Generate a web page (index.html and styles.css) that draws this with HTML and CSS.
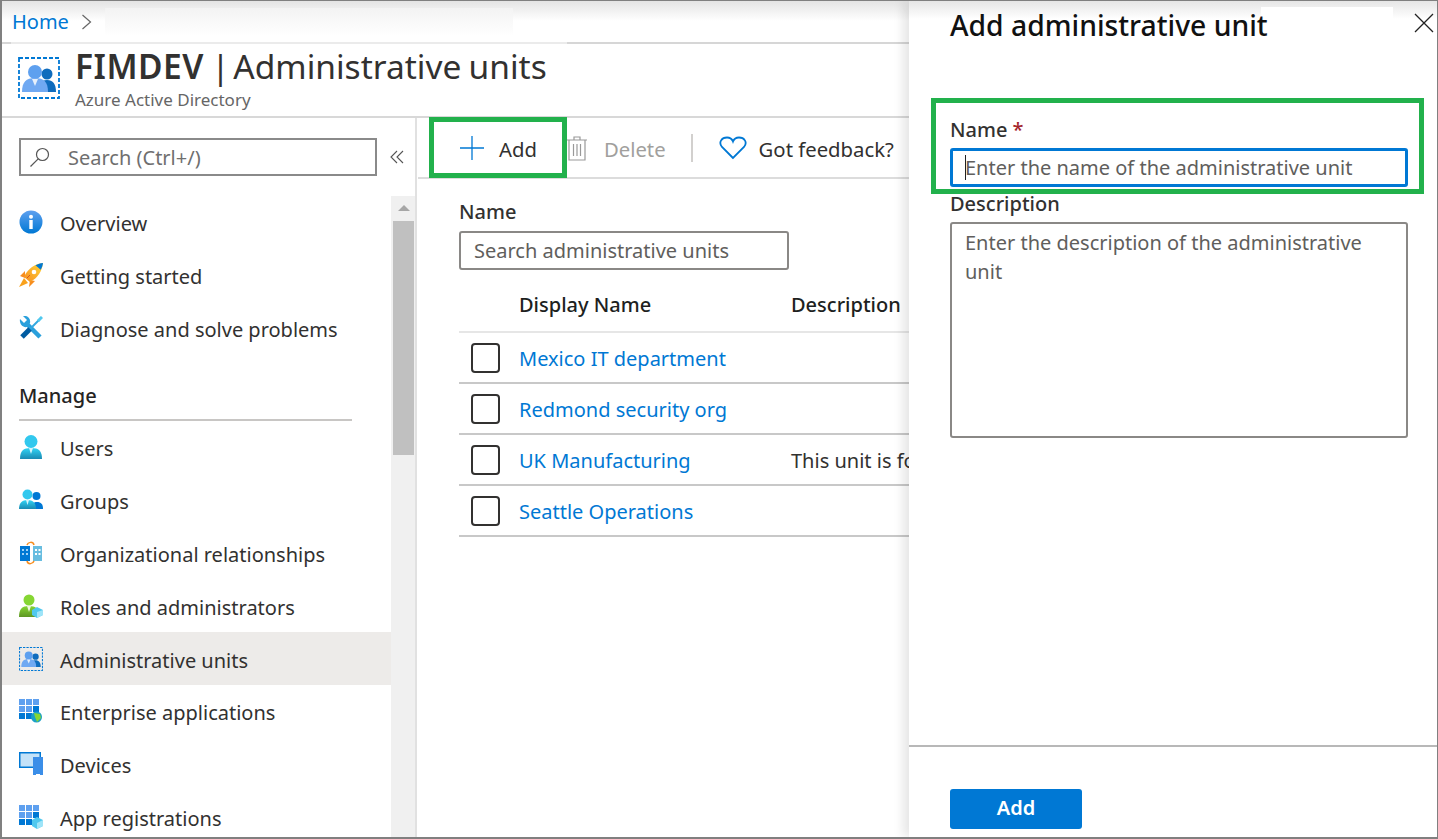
FILE: index.html
```html
<!DOCTYPE html>
<html lang="en">

<head>
    <meta charset="UTF-8">
    <title>FIMDEV | Administrative units</title>
    <link rel="stylesheet" href="styles.css">
</head>

<body>
    <svg class="sprites" width="0" height="0">
        <defs>
            <linearGradient id="blueBall" x1="0" y1="0" x2="0" y2="1"><stop offset="0" stop-color="#5ea0ef"/><stop offset="1" stop-color="#0078d4"/></linearGradient>
            <linearGradient id="cyanUser" x1="0" y1="0" x2="0" y2="1"><stop offset="0" stop-color="#32d4f5"/><stop offset="1" stop-color="#198ab3"/></linearGradient>
            <linearGradient id="greenUser" x1="0" y1="0" x2="0" y2="1"><stop offset="0" stop-color="#86d633"/><stop offset="1" stop-color="#5e9624"/></linearGradient>
            <linearGradient id="rocket" x1="0" y1="1" x2="1" y2="0"><stop offset="0" stop-color="#f78d1e"/><stop offset="1" stop-color="#ffd83a"/></linearGradient>
            <symbol id="adminUnit" viewBox="0 0 42 42">
                <rect x="1" y="1" width="40" height="40" fill="none" stroke="#0078d4" stroke-width="1.800" stroke-dasharray="4 2"/>
                <circle cx="29" cy="17" r="5.500" fill="#0f6cbd"/>
                <path d="M20 35c0-8 3-12 9-12s9 4 9 12z" fill="#0f6cbd"/>
                <circle cx="17" cy="15" r="7" fill="#5ea0ef"/>
                <path d="M4 35c0-10 4-14 13-14s13 4 13 14z" fill="#70a9f2"/>
                <path d="M14 22h6l-3 7z" fill="#e6f0fb"/>
            </symbol>
            <symbol id="gridBlue" viewBox="0 0 24 24">
                <path fill="#5ea0ef" d="M0 0h6v6H0zM7 0h6v6H7zM14 0h6v6h-6zM0 7h6v6H0zM7 7h6v6H7z"/>
                <path fill="#0078d4" d="M14 7h6v6h-6zM0 14h6v6H0zM7 14h6v6H7z"/>
            </symbol>
        </defs>
    </svg>

    <div class="window">
        <div class="crumbs">
            <a class="link" href="#">Home</a>
            <svg class="chev" width="11" height="16" viewBox="0 0 11 16"><path d="M1.500 1l8 7-8 7" fill="none" stroke="#666" stroke-width="1.200"/></svg>
        </div>

        <div class="title-bar">
            <svg class="title-icon" width="42" height="42"><use href="#adminUnit"/></svg>
            <div class="title-text">
                <h1><b>FIMDEV</b> <span class="bar">| </span>Administrative units</h1>
                <div class="subtitle">Azure Active Directory</div>
            </div>
        </div>

        <div class="body">
            <nav class="sidebar">
                <div class="side-search-row">
                    <div class="side-search">
                        <svg width="22" height="22" viewBox="0 0 22 22"><circle cx="13.500" cy="8.500" r="6" fill="none" stroke="#555" stroke-width="1.200"/><path d="M9.200 12.800L1.500 20.500" stroke="#555" stroke-width="1.200"/></svg>
                        <span>Search (Ctrl+/)</span>
                    </div>
                    <svg class="collapse" width="14" height="14" viewBox="0 0 14 14"><path d="M7 1L1 7l6 6M13 1L7 7l6 6" fill="none" stroke="#555" stroke-width="1.100"/></svg>
                </div>

                <div class="side-scroll">
                    <ul class="menu">
                        <li class="item">
                            <svg class="ico" viewBox="0 0 24 24"><circle cx="12" cy="12" r="11.500" fill="url(#blueBall)"/><rect x="10.300" y="10" width="3.400" height="9" fill="#fff"/><circle cx="12" cy="6.800" r="2" fill="#fff"/></svg>
                            Overview
                        </li>
                        <li class="item">
                            <svg class="ico" viewBox="0 0 24 24"><path d="M6 8L1 13l5 2zM11 17l-1 7 6-6z" fill="#f78d1e"/><path d="M5 15l-5 9 9-4z" fill="#f9a11b"/><path d="M24 0C16 1 9 5 5 14l6 5C19 15 23 8 24 0z" fill="url(#rocket)"/><path d="M24 0c-3 .3-5 1-7.500 2.300l5.200 4.400C23 4.500 23.700 2.500 24 0z" fill="#0078d4"/><circle cx="15" cy="9" r="2.300" fill="#fff"/><path d="M8 15l3-3" stroke="#d9541e" stroke-width="1"/></svg>
                            Getting started
                        </li>
                        <li class="item">
                            <svg class="ico" viewBox="0 0 24 24"><path d="M8 8l13 13" stroke="#2aa0dc" stroke-width="4.500"/><path d="M1 3l4 4 3-3-4-4c4-1 8 2 7 7l-3 4C4 12 0 8 1 3z" fill="#2aa0dc"/><path d="M11 13l9-9" stroke="#32a8e0" stroke-width="2"/><path d="M19 5l4-4" stroke="#50c8ee" stroke-width="3"/><path d="M3 21l8-8" stroke="#005ba1" stroke-width="5"/></svg>
                            Diagnose and solve problems
                        </li>
                    </ul>

                    <div class="menu-head">Manage</div>

                    <ul class="menu menu-manage">
                        <li class="item">
                            <svg class="ico" viewBox="0 0 24 24"><circle cx="12" cy="6.500" r="6.500" fill="#32c8ee"/><path d="M1 24c0-8 3-11 11-11s11 3 11 11z" fill="url(#cyanUser)"/><path d="M10 13h4l-2 6z" fill="#d8f4fb"/></svg>
                            Users
                        </li>
                        <li class="item">
                            <svg class="ico" viewBox="0 0 24 24"><circle cx="17.500" cy="8" r="4" fill="#0078d4"/><path d="M12 21c0-5 2-7 6-7s6 2 6 7z" fill="#0078d4"/><circle cx="8.500" cy="6.500" r="5" fill="#32c8ee"/><path d="M0 21c0-6 3-9 8.500-9s8.500 3 8.500 9z" fill="url(#cyanUser)"/><path d="M7 12h3l-1.500 5z" fill="#d8f4fb"/></svg>
                            Groups
                        </li>
                        <li class="item">
                            <svg class="ico" viewBox="0 0 24 24"><rect x="1" y="5" width="10" height="15" fill="#0078d4"/><rect x="14" y="5" width="9" height="15" fill="#68bde0"/><path fill="#9ed0f5" d="M3 8h2v2H3zM7 8h2v2H7zM3 12h2v2H3zM7 12h2v2H7z"/><path fill="#fff" d="M16 8h2v2h-2zM19.500 8h2v2h-2zM16 12h2v2h-2zM19.500 12h2v2h-2z"/><path d="M8 4c1-3 6-4 7 0M15 20c-1 3-6 4-7 0" fill="none" stroke="#f78d1e" stroke-width="1.500"/></svg>
                            Organizational relationships
                        </li>
                        <li class="item">
                            <svg class="ico" viewBox="0 0 24 24"><circle cx="10" cy="6" r="5.500" fill="#86d633"/><path d="M0 23c0-8 3-11 10-11s10 3 10 11z" fill="url(#greenUser)"/><path d="M8 12h4l-2 6z" fill="#eef8de"/><path d="M18 13l6 3v5l-6 3-5-3v-5z" fill="#50c8ee"/><path d="M18 18l6-2v5l-6 3z" fill="#9ee4f8"/></svg>
                            Roles and administrators
                        </li>
                        <li class="item active">
                            <svg class="ico" viewBox="0 0 24 24"><use href="#adminUnit" width="24" height="24"/></svg>
                            Administrative units
                        </li>
                        <li class="item">
                            <svg class="ico" viewBox="0 0 24 24"><use href="#gridBlue" width="24" height="24"/><circle cx="17.500" cy="18" r="5.500" fill="#1aa0c8"/><path d="M15 14l6 1 1 4-4 4-2-5z" fill="#86d633"/></svg>
                            Enterprise applications
                        </li>
                        <li class="item">
                            <svg class="ico" viewBox="0 0 24 24"><rect x="0" y="0" width="22" height="16" fill="#0078d4"/><rect x="1.500" y="1.500" width="19" height="13" fill="#c4e2f8"/><rect x="14" y="5" width="10" height="18" fill="#3b8ee8"/><rect x="17" y="22" width="4" height="1.500" fill="#fff"/></svg>
                            Devices
                        </li>
                        <li class="item">
                            <svg class="ico" viewBox="0 0 24 24"><use href="#gridBlue" width="24" height="24"/><path d="M18 12l6 3v6l-6 3-5-3v-6z" fill="#50c8ee"/><path d="M18 18l6-3v6l-6 3z" fill="#9ee4f8"/></svg>
                            App registrations
                        </li>
                    </ul>
                </div>

                <div class="scrollbar">
                    <div class="scroll-up"></div>
                    <div class="scroll-thumb"></div>
                </div>
            </nav>

            <main class="content">
                <div class="toolbar">
                    <button class="tool">
                        <svg width="26" height="26" viewBox="0 0 26 26"><path d="M13 1v24M1 13h24" stroke="#0078d4" stroke-width="1.300"/></svg>
                        <span>Add</span>
                    </button>
                    <button class="tool tool-off">
                        <svg width="22" height="26" viewBox="0 0 22 26"><path d="M1 5h20M8 5V2h6v3M3 5v20h16V5M7.500 9v12M11 9v12M14.500 9v12" fill="none" stroke="#999" stroke-width="1.200"/></svg>
                        <span>Delete</span>
                    </button>
                    <div class="tool-sep"></div>
                    <button class="tool tool-feedback">
                        <svg width="28" height="24" viewBox="0 0 28 24"><path d="M14 22L3 11C-1 6 3 1.500 8 1.500c3 0 5 1.500 6 4 1-2.500 3-4 6-4 5 0 9 4.500 5 9.500z" fill="none" stroke="#0078d4" stroke-width="1.800"/></svg>
                        <span>Got feedback?</span>
                    </button>
                </div>

                <div class="filter">
                    <label class="filter-label">Name</label>
                    <div class="filter-input">Search administrative units</div>
                </div>

                <div class="grid">
                    <div class="row head">
                        <div class="cell-check"></div>
                        <div class="cell-name">Display Name</div>
                        <div>Description</div>
                    </div>
                    <div class="row">
                        <div class="cell-check"><span class="check"></span></div>
                        <div class="cell-name"><a class="link" href="#">Mexico IT department</a></div>
                        <div></div>
                    </div>
                    <div class="row">
                        <div class="cell-check"><span class="check"></span></div>
                        <div class="cell-name"><a class="link" href="#">Redmond security org</a></div>
                        <div></div>
                    </div>
                    <div class="row">
                        <div class="cell-check"><span class="check"></span></div>
                        <div class="cell-name"><a class="link" href="#">UK Manufacturing</a></div>
                        <div class="cell-name">This unit is for the UK manufacturing team</div>
                    </div>
                    <div class="row">
                        <div class="cell-check"><span class="check"></span></div>
                        <div class="cell-name"><a class="link" href="#">Seattle Operations</a></div>
                        <div></div>
                    </div>
                </div>
            </main>
        </div>

        <aside class="panel">
            <div class="panel-top">
                <h2>Add administrative unit</h2>
                <svg class="close" width="20" height="20" viewBox="0 0 20 20"><path d="M1 1l18 18M19 1L1 19" stroke="#222" stroke-width="1.300"/></svg>
            </div>
            <div class="panel-form">
                <div class="field-label">Name <span class="req">*</span></div>
                <div class="field-input"><span class="caret"></span>Enter the name of the administrative unit</div>
                <div class="field-label desc-label">Description</div>
                <div class="field-area">Enter the description of the administrative unit</div>
            </div>
            <div class="panel-foot">
                <button class="primary">Add</button>
            </div>
        </aside>

        <div class="patch patch-crumbs"></div>
        <div class="patch patch-line"></div>
        <div class="patch patch-panel"></div>

        <div class="callout callout-add"></div>
        <div class="callout callout-name"></div>
    </div>
</body>

</html>
```

FILE: styles.css
```css
* {
    box-sizing: border-box;
}

html, body {
    margin: 0;
    height: 100%;
    overflow: hidden;
}

body {
    font-family: "Noto Sans", "Open Sans", sans-serif;
    font-size: 20px;
    color: #323130;
    background-color: #fff;
}

.sprites {
    position: absolute;
}

.window {
    position: relative;
    width: 1438px;
    height: 839px;
    display: flex;
    flex-direction: column;
    overflow: hidden;
    border: 1px solid #808080;
    border-left-width: 2px;
    border-bottom-width: 2px;
}

.link {
    color: #0078d4;
    text-decoration: none;
}

.crumbs {
    height: 43px;
    flex-shrink: 0;
    display: flex;
    align-items: center;
    gap: 12px;
    padding: 0 0 0 10px;
    border-bottom: 2px solid #d6d6d6;
    background: linear-gradient(#e4e4e4, #fff 20px);
}

.title-bar {
    height: 74px;
    flex-shrink: 0;
    display: flex;
    gap: 15px;
    padding: 0 0 0 16px;
    border-bottom: 2px solid #d8d8d8;
}

.title-icon {
    margin-top: 13px;
}

h1 {
    margin: 0;
    font-size: 33.500px;
    font-weight: 400;
    line-height: 44px;
    color: #323130;
    white-space: nowrap;
    word-spacing: -1.500px;
}

h1 b {
    font-weight: 600;
    letter-spacing: 0.500px;
}

.bar {
    word-spacing: -5px;
}

.subtitle {
    font-size: 17px;
    line-height: 20px;
    margin-top: 2px;
    color: #666;
}

.body {
    flex: 1;
    display: flex;
    min-height: 0;
}

.sidebar {
    position: relative;
    width: 415px;
    flex-shrink: 0;
    border-right: 2px solid #e1e1e1;
    overflow: hidden;
}

.side-search-row {
    display: flex;
    align-items: center;
    gap: 13px;
    padding: 20px 0 0 17px;
}

.side-search {
    width: 358px;
    height: 38px;
    display: flex;
    align-items: center;
    gap: 17px;
    padding-left: 8px;
    border: 2px solid #8a8a8a;
    color: #6f6f6f;
}

.side-scroll {
    width: 389px;
    padding-top: 21px;
}

.menu {
    list-style: none;
    margin: 0;
    padding: 0;
}

.item {
    height: 53px;
    display: flex;
    align-items: center;
    gap: 17px;
    padding-left: 17px;
    color: #323130;
    white-space: nowrap;
}

.menu-manage .item {
    height: 52.800px;
    padding-top: 3px;
}

.item.active {
    background-color: #edebe9;
}

.ico {
    width: 24px;
    height: 24px;
    flex-shrink: 0;
    margin-top: -3px;
}

.menu-head {
    margin: 15px 0 0 17px;
    width: 333px;
    height: 50px;
    line-height: 50px;
    border-bottom: 2px solid #c8c6c4;
    color: #252423;
    font-weight: 500;
}

.scrollbar {
    position: absolute;
    left: 389px;
    top: 78px;
    bottom: 0;
    width: 24px;
    background-color: #f0f0f0;
    padding: 0 1px 0 2px;
}

.scroll-up {
    height: 25px;
    display: flex;
    justify-content: center;
    padding-top: 9px;
}

.scroll-up::before {
    content: "";
    border-left: 6px solid transparent;
    border-right: 6px solid transparent;
    border-bottom: 6px solid #a6a6a6;
    height: 0;
}

.scroll-thumb {
    height: 234px;
    background-color: #c0c0c0;
}

.content {
    flex: 1;
    min-width: 0;
    padding-left: 1px;
}

.toolbar {
    height: 61px;
    display: flex;
    align-items: center;
    padding-left: 41px;
    border-bottom: 2px solid #dcdcdc;
}

.tool {
    display: flex;
    align-items: center;
    gap: 14px;
    padding: 0;
    border: 0;
    background: none;
    font: inherit;
    font-size: 20.300px;
    color: #323130;
}

.tool span {
    padding-top: 3px;
}

.tool-off {
    margin-left: 29px;
    gap: 16px;
    color: #a19f9d;
}

.tool-sep {
    width: 2px;
    height: 28px;
    margin: 0 26px 0 25px;
    background-color: #d2d0ce;
}

.tool-feedback {
    gap: 12px;
}

.filter {
    padding: 20px 0 0 41px;
}

.filter-label {
    display: block;
    line-height: 26px;
    color: #323130;
    font-weight: 500;
}

.filter-input {
    width: 330px;
    height: 39px;
    margin-top: 6px;
    padding-left: 13px;
    line-height: 35px;
    border: 2px solid #8a8886;
    border-radius: 3px;
    color: #605e5c;
}

.grid {
    margin: 18px 0 0 41px;
    width: 450px;
}

.row {
    height: 51px;
    display: flex;
    align-items: center;
    border-bottom: 2px solid #c8c8c8;
    white-space: nowrap;
    overflow: hidden;
}

.row.head {
    height: 45px;
    padding-bottom: 10px;
    border-bottom-color: #e6e6e6;
    color: #201f1e;
    font-weight: 500;
}

.cell-check {
    width: 60px;
    flex-shrink: 0;
    padding-left: 12px;
    display: flex;
}

.cell-name {
    width: 272px;
    flex-shrink: 0;
    padding-top: 2px;
}

.head .cell-name {
    padding-top: 0;
}

.check {
    width: 29px;
    height: 30px;
    border: 2px solid #323130;
    border-radius: 4px;
}

.panel {
    position: absolute;
    top: 0;
    right: 0;
    bottom: 0;
    width: 528px;
    display: flex;
    flex-direction: column;
    background: linear-gradient(#e6e6e6, #fff 18px);
    box-shadow: -6px 0 10px rgba(0, 0, 0, 0.1);
}

.panel-top {
    height: 97px;
    flex-shrink: 0;
    display: flex;
    justify-content: space-between;
    padding: 4px 3px 0 41px;
}

h2 {
    margin: 0;
    font-size: 28.300px;
    font-weight: 500;
    line-height: 40px;
    color: #111;
    position: relative;
    z-index: 1;
}

.close {
    margin-top: 8px;
    position: relative;
    z-index: 1;
}

.panel-form {
    flex: 1;
    padding: 18px 29px 0 41px;
    border-bottom: 2px solid #b8b8b8;
}

.field-label {
    line-height: 28px;
    color: #323130;
    font-weight: 500;
}

.req {
    color: #a4262c;
}

.desc-label {
    margin-top: 3px;
}

.field-input {
    position: relative;
    height: 39px;
    margin-top: 4px;
    padding-left: 12px;
    line-height: 33px;
    border: 3px solid #0078d4;
    border-radius: 3px;
    color: #605e5c;
    white-space: nowrap;
}

.caret {
    position: absolute;
    left: 12px;
    top: 4px;
    bottom: 4px;
    width: 1px;
    background-color: #222;
}

.field-area {
    height: 216px;
    margin-top: 4px;
    padding: 4px 13px;
    line-height: 29px;
    border: 2px solid #8a8886;
    border-radius: 3px;
    color: #605e5c;
}

.panel-foot {
    height: 90px;
    flex-shrink: 0;
    padding: 42px 0 0 41px;
}

.primary {
    width: 132px;
    height: 40px;
    padding: 0 0 3px;
    border: 0;
    border-radius: 3px;
    background-color: #0078d4;
    color: #fff;
    font: inherit;
    font-weight: 600;
}

/* retouched strips in the top of the shot */
.patch {
    position: absolute;
}

.patch-crumbs {
    left: 103px;
    top: 7px;
    width: 408px;
    height: 28px;
    background: linear-gradient(#f3f3f3, #fff);
}

.patch-line {
    left: 9px;
    top: 41px;
    width: 556px;
    height: 2px;
    background-color: #ebebeb;
}

.patch-panel {
    left: 1259px;
    top: 6px;
    width: 132px;
    height: 48px;
    background-color: #fff;
}

.callout {
    position: absolute;
    border: 5px solid #22b14c;
}

.callout-add {
    left: 427px;
    top: 116px;
    width: 138px;
    height: 61px;
}

.callout-name {
    left: 929px;
    top: 97px;
    width: 493px;
    height: 96px;
}
```
